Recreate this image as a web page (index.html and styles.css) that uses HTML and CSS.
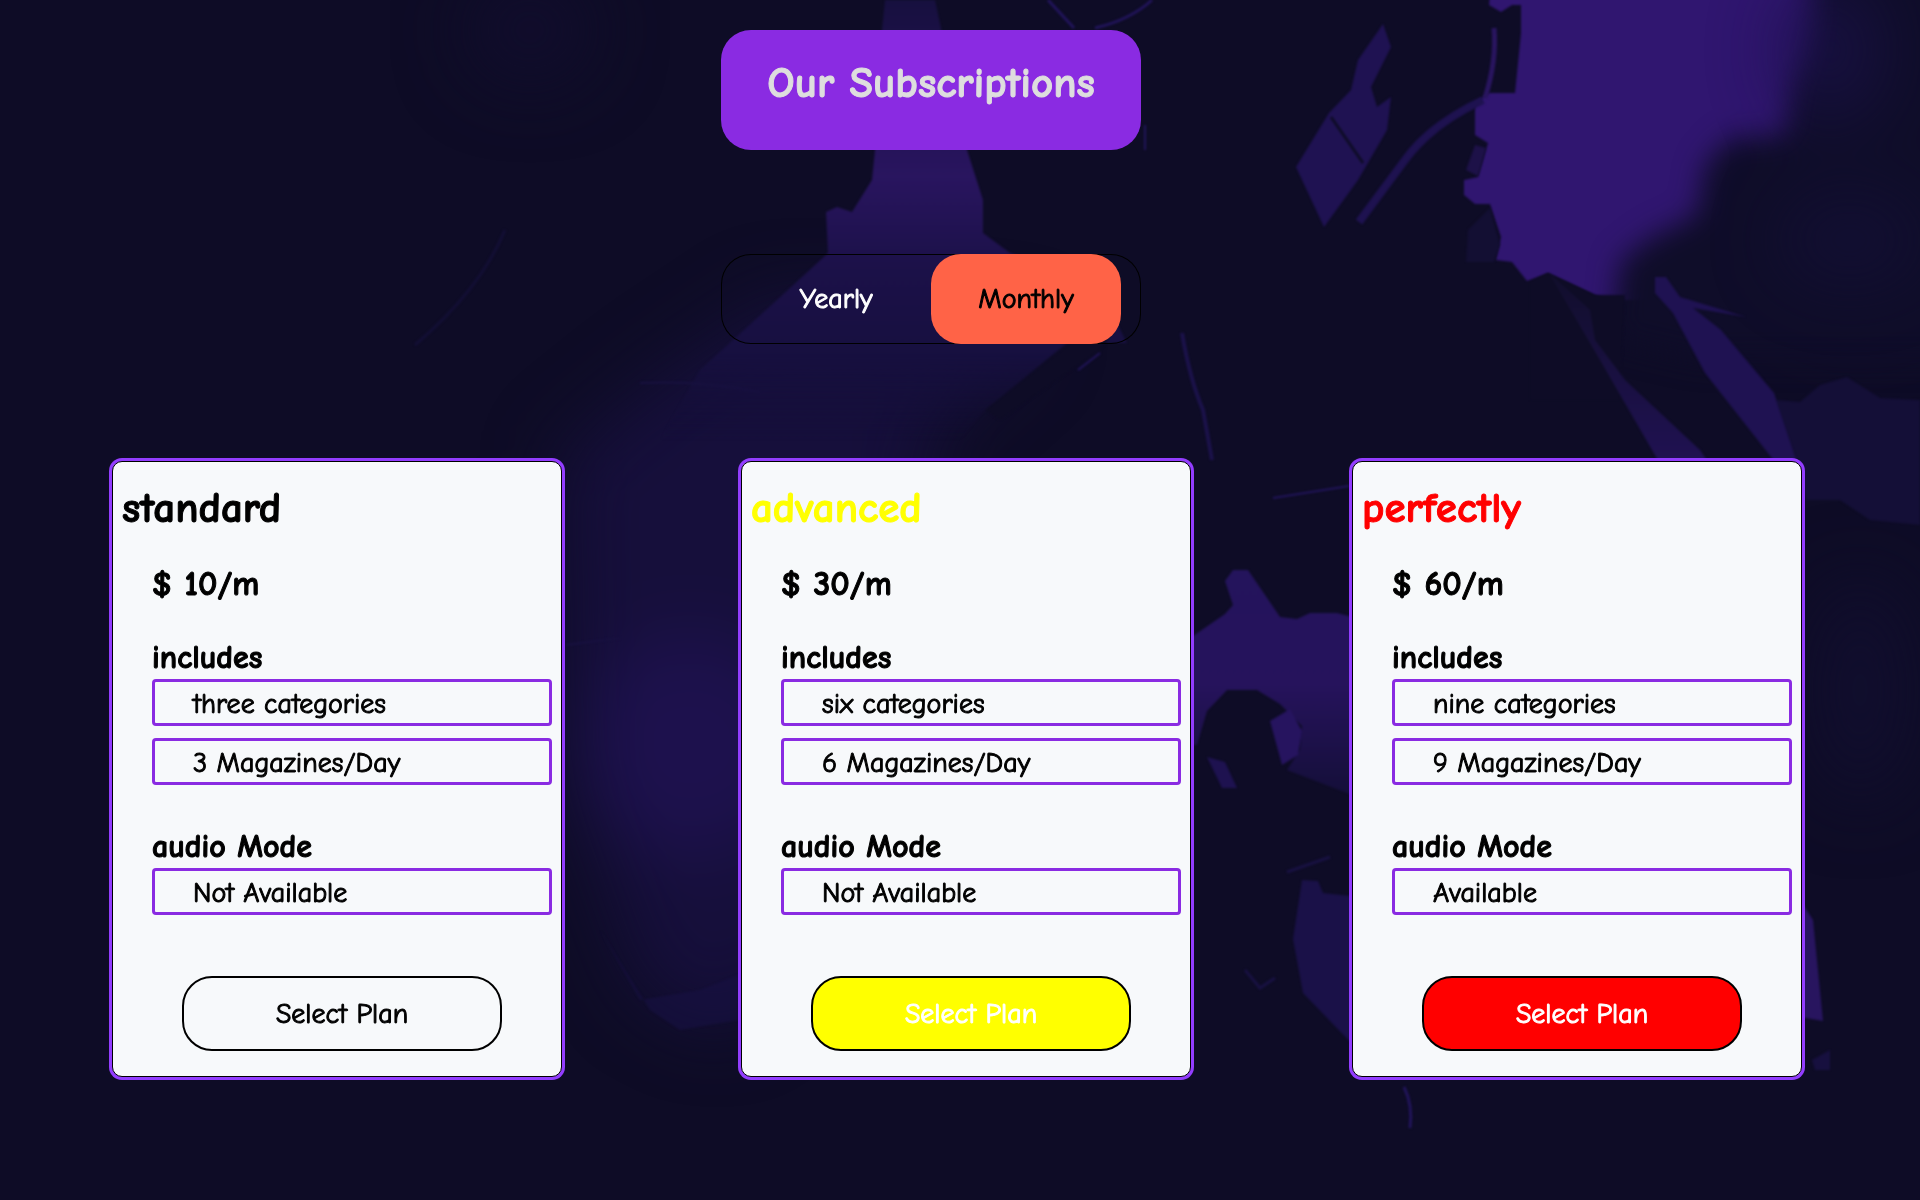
FILE: index.html
```html
<!DOCTYPE html>
<html lang="en">
<head>
<meta charset="utf-8">
<meta name="viewport" content="width=device-width, initial-scale=1">
<title>Our Subscriptions</title>
<link rel="stylesheet" href="styles.css">
</head>
<body>
<svg class="backdrop" viewBox="0 0 1920 1200" preserveAspectRatio="xMidYMid slice" aria-hidden="true">
  <defs>
    <filter id="edge" filterUnits="userSpaceOnUse" x="0" y="-100" width="2100" height="1400" color-interpolation-filters="sRGB"><feGaussianBlur stdDeviation="1"/></filter>
    <filter id="soft" filterUnits="userSpaceOnUse" x="0" y="-100" width="2100" height="1400" color-interpolation-filters="sRGB"><feGaussianBlur stdDeviation="14"/></filter>
    <filter id="haze" filterUnits="userSpaceOnUse" x="0" y="-100" width="2100" height="1400" color-interpolation-filters="sRGB"><feGaussianBlur stdDeviation="36"/></filter>
    <linearGradient id="robe" x1="0" y1="0" x2="0" y2="1">
      <stop offset="0" stop-color="#17103f"/><stop offset=".4" stop-color="#29155f"/><stop offset=".6" stop-color="#1c1149"/><stop offset=".8" stop-color="#171040"/><stop offset="1" stop-color="#150f3a" stop-opacity="0"/>
    </linearGradient>
    <linearGradient id="mist" x1="0" y1="0" x2="0" y2="1">
      <stop offset="0" stop-color="#24145c"/><stop offset=".5" stop-color="#26135c"/><stop offset="1" stop-color="#140f38"/>
    </linearGradient>
    <linearGradient id="fall" x1="0" y1="0" x2="0" y2="1">
      <stop offset="0" stop-color="#110e2c"/><stop offset="1" stop-color="#201252"/>
    </linearGradient>
  </defs>
  <rect width="1920" height="1200" fill="#0e0c26"/>
  <!-- central haze -->
  <g filter="url(#haze)">
    <path d="M780 300L1040 330L930 430L900 900L720 1030L640 990L570 780L560 460L660 380Z" fill="#160f3b"/>
    <ellipse cx="690" cy="745" rx="110" ry="110" fill="#1d114d"/>
    <ellipse cx="530" cy="30" rx="60" ry="50" fill="#110d2d"/>
    <ellipse cx="1860" cy="270" rx="90" ry="60" fill="#120e32"/>
    <ellipse cx="1860" cy="690" rx="50" ry="110" fill="#110e2e"/>
  </g>
  <g filter="url(#edge)">
    <path d="M600 930L650 1010L680 1030L738 1020V975L700 990L640 1000Z" fill="#181042" opacity=".6"/>
    <!-- robe -->
    <path d="M885 0H935L967 150L983 200V233L1010 253L1060 270L1110 310L1127 343H1067L1030 373L985 410L960 440H660L700 370L777 300L828 253L826 212L837 207L852 212L872 180L875 150L879 60Z" fill="url(#robe)"/>
    <path d="M1068 345L985 410L1000 420L1100 350L1115 330Z" fill="#0e0c26"/>
    <g fill="none" stroke="#21145a" stroke-width="2">
      <path d="M1152 0Q1130 20 1095 28M1048 0L1074 28" stroke-width="3"/>
      <path d="M1182 333Q1190 380 1203 410L1212 460" stroke-width="4" opacity=".7"/>
      <path d="M1100 353L1078 370M1145 125V150M1273 498L1349 486"/>
      <path d="M505 230Q480 290 415 345" stroke="#130f35" stroke-width="3"/>
      <path d="M640 383Q700 380 760 392M566 645L620 638" stroke="#181140"/>
      <path d="M1404 1087Q1413 1105 1410 1128" stroke-width="3"/>
    </g>
    <!-- light between the ruins -->
    <path d="M1489 5L1495 -60H1860V140L1810 300H1609L1595 295L1548 273L1527 281L1512 262L1496 260L1501 237L1490 204H1475L1464 195V180L1478 177L1488 143L1475 135V103L1489 93H1515L1521 33V5L1512 5L1501 12Z" fill="#301670"/>
  </g>
  <path d="M1793 -80Q1835 30 1795 80L1785 135L1730 138L1705 165L1697 215L1650 238L1620 262L1612 340L1700 360H2000V-80Z" fill="#0f0d29" filter="url(#soft)"/>
  <g filter="url(#haze)" opacity=".8">
    <ellipse cx="1830" cy="50" rx="50" ry="70" fill="#1a1147"/>
    <ellipse cx="1850" cy="240" rx="70" ry="40" fill="#141037"/>
  </g>
  <g filter="url(#edge)">
    <path d="M1530 282L1548 273L1595 295H1625L1620 400L1530 400Z" fill="#0e0c26"/>
    <path d="M1383 24L1391 47L1371 87L1377 107L1391 97L1387 130L1358 180L1324 227L1296 167L1329 113L1351 90L1358 60Z" fill="#1f1252"/>
    <path d="M1331 117L1363 163" stroke="#0e0c26" stroke-width="3"/>
    <path d="M1483 100Q1430 125 1405 160L1359 222" fill="none" stroke="#1e1250" stroke-width="8"/>
    <path d="M1494 28Q1497 60 1485 98" fill="none" stroke="#29155f" stroke-width="5"/>
    <path d="M1475 145L1486 148L1478 176L1466 170Z" fill="#1d1148"/>
    <path d="M1490 208L1500 245L1494 262L1466 262L1468 230Z" fill="#130f33"/>
    <path d="M1549 273L1590 310L1595 340L1625 380L1700 450L1708 462H1659L1600 360Z" fill="url(#fall)"/>
    <path d="M1655 277H1666L1680 297L1746 317L1693 308L1721 330L1774 393L1797 462H1775L1705 373L1673 313L1655 293Z" fill="#1f1252"/>
    <path d="M1776 400L1800 402L1820 385L1847 377L1880 398L1920 400V525L1870 520L1840 500L1806 500L1797 460Z" fill="#140f37"/>
    <!-- mist and wheel between the second and third plan -->
    <path d="M1180 645L1225 614L1233 605L1225 581L1233 570H1248L1280 617L1297 619L1310 613H1337L1360 619V798L1287 770L1300 750L1302 726L1280 704L1257 690H1227L1207 711L1197 745H1180Z" fill="url(#mist)"/>
    <path d="M1270 721L1290 709L1302 731L1298 755L1282 765Z" fill="#26145f"/>
    <path d="M1207 757L1225 762L1237 788H1222Z" fill="#1e1250"/>
    <path d="M1302 880L1318 881L1323 893L1360 897V1052L1303 993L1293 939Z" fill="#1a1148"/>
    <path d="M1287 872L1330 857M1245 970L1260 988L1275 978" fill="none" stroke="#181142" stroke-width="3"/>
    <path d="M1800 900L1813 920L1823 1021L1800 1017Z" fill="#28155f"/>
    <path d="M1812 1060L1830 1050V1070H1815Z" fill="#17103f"/>
  </g>
</svg>

<main class="page">
  <h1 class="title">Our Subscriptions</h1>

  <div class="period">
    <button class="period-option" type="button">Yearly</button>
    <button class="period-option is-active" type="button">Monthly</button>
  </div>

  <div class="plans">
    <article class="plan plan-standard">
      <h2 class="plan-name">standard</h2>
      <div class="plan-body">
        <p class="plan-price">$ 10/m</p>
        <h3 class="plan-heading">includes</h3>
        <ul class="features"><li>three categories</li><li>3 Magazines/Day</li></ul>
        <h3 class="plan-heading">audio Mode</h3>
        <ul class="features"><li>Not Available</li></ul>
      </div>
      <button class="select" type="button">Select Plan</button>
    </article>
    <article class="plan plan-advanced">
      <h2 class="plan-name">advanced</h2>
      <div class="plan-body">
        <p class="plan-price">$ 30/m</p>
        <h3 class="plan-heading">includes</h3>
        <ul class="features"><li>six categories</li><li>6 Magazines/Day</li></ul>
        <h3 class="plan-heading">audio Mode</h3>
        <ul class="features"><li>Not Available</li></ul>
      </div>
      <button class="select" type="button">Select Plan</button>
    </article>
    <article class="plan plan-perfectly">
      <h2 class="plan-name">perfectly</h2>
      <div class="plan-body">
        <p class="plan-price">$ 60/m</p>
        <h3 class="plan-heading">includes</h3>
        <ul class="features"><li>nine categories</li><li>9 Magazines/Day</li></ul>
        <h3 class="plan-heading">audio Mode</h3>
        <ul class="features"><li>Available</li></ul>
      </div>
      <button class="select" type="button">Select Plan</button>
    </article>
  </div>
</main>
</body>
</html>
```
FILE: styles.css
```css
* { box-sizing: border-box; }

body {
  margin: 0;
  min-height: 100vh;
  background: #0e0c26;
  color: #000;
  font-family: "Comic Sans MS", "Comic Neue", cursive;
  font-size: 28px;
  -webkit-text-stroke: 1px currentColor;
}

h1, h2, h3, p, ul { margin: 0; padding: 0; }
ul { list-style: none; }
button { font: inherit; cursor: pointer; }

.backdrop {
  position: fixed;
  inset: 0;
  z-index: -1;
  width: 100%;
  height: 100%;
}

.page {
  display: flex;
  flex-direction: column;
  padding: 30px 118px 120px 112px;
}

.title {
  align-self: center;
  width: 420px;
  height: 120px;
  margin-right: 52px;
  border-radius: 30px;
  background: #8a2be2;
  color: #dedede;
  font-size: 43px;
  line-height: 106px;
  text-align: center;
  white-space: nowrap;
}

.period {
  align-self: center;
  display: flex;
  justify-content: center;
  width: 420px;
  height: 90px;
  margin: 104px 52px 117px 0;
  border-radius: 30px;
  box-shadow: inset 0 0 0 1px #000;
}

.period-option {
  width: 190px;
  padding: 0;
  border: 0;
  border-radius: 30px;
  background: transparent;
  color: #fff;
}

.period-option.is-active { background: #ff6347; color: #000; }

.plans {
  display: flex;
  flex-wrap: wrap;
  justify-content: space-between;
}

.plan {
  display: flex;
  flex-direction: column;
  width: 450px;
  padding: 16px 9px 25px;
  border: 1px solid #000;
  border-radius: 10px;
  background: #f7f9fb;
  box-shadow: 0 0 0 3px #933dff;
}

.plan-advanced { margin-left: 18px; }

.plan-name { font-size: 43px; line-height: 60px; }
.plan-advanced .plan-name { color: #ff0; }
.plan-perfectly .plan-name { color: #f00; }

.plan-body { padding-left: 30px; }

.plan-price {
  margin: 24px 0 32px;
  font-size: 34px;
  font-weight: 700;
  line-height: 44px;
}

.plan-heading {
  margin-bottom: 2px;
  font-size: 32px;
  line-height: 39px;
}

.features {
  display: grid;
  gap: 12px;
  margin-bottom: 42px;
}

.features li {
  width: 400px;
  height: 47px;
  padding-left: 38px;
  border: 3px solid #8a2be2;
  border-radius: 4px;
  line-height: 44px;
}

.select {
  align-self: center;
  width: 320px;
  height: 75px;
  margin: 19px 0 0 10px;
  padding: 0;
  border: 2px solid #000;
  border-radius: 30px;
  background: transparent;
}

.plan-advanced .select { background: #ff0; color: #fff; }
.plan-perfectly .select { background: #f00; color: #fff; }
```
